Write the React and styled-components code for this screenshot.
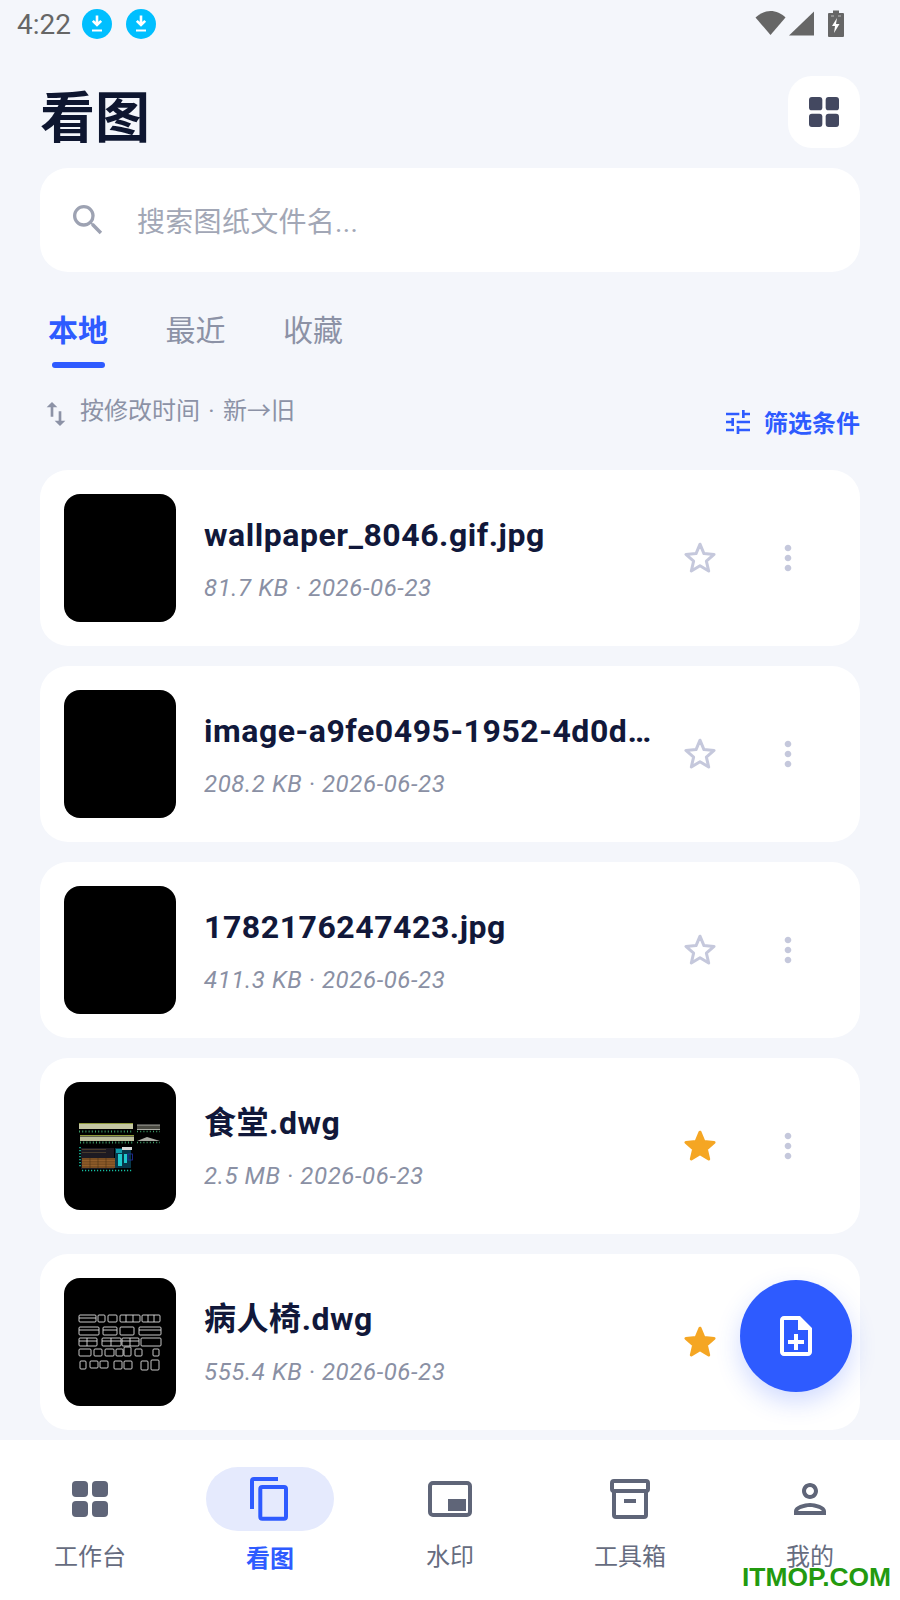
import React from "react";
import styled, { createGlobalStyle } from "styled-components";
import { MdSearch, MdSwapVert, MdTune, MdMoreVert, MdOutlineNoteAdd, MdOutlinePerson } from "react-icons/md";

const Global = createGlobalStyle`
  html, body { margin: 0; padding: 0; background: #f4f6fb; }
  * { box-sizing: border-box; }
  body { font-family: Roboto, "Noto Sans CJK SC", sans-serif; }
`;

const Page = styled.div`
  position: relative;
  width: 900px;
  height: 1600px;
  overflow: hidden;
  background: #f4f6fb;
  display: flex;
  flex-direction: column;
`;

const StatusBar = styled.div`
  height: 50px;
  padding: 0 56px 0 17px;
  display: flex;
  align-items: center;
  color: #666666;
`;
const Time = styled.span`
  font-size: 28px;
  line-height: 50px;
  margin-right: 11px;
  font-weight: 400;
`;
const DownloadBadge = styled.svg`
  width: 30px;
  height: 30px;
  margin: 0 14px 2px 0;
  flex: none;
`;
const StatusRight = styled.div`
  margin-left: auto;
  margin-bottom: 4px;
  display: flex;
  align-items: center;
`;
const StatusSvg = styled.svg`
  display: block;
  margin-left: ${(p) => p.$gap || 0}px;
`;

const Header = styled.div`
  margin-top: 26px;
  padding: 0 40px;
  height: 72px;
  display: flex;
  align-items: center;
  justify-content: space-between;
`;
const Title = styled.h1`
  margin: 0;
  padding-top: 2px;
  font-size: 55px;
  line-height: 72px;
  font-weight: 700;
  color: #0e1630;
  font-family: "Noto Sans CJK SC", sans-serif;
`;
const SquareButton = styled.div`
  width: 72px;
  height: 72px;
  border-radius: 24px;
  background: #fff;
  display: flex;
  align-items: center;
  justify-content: center;
`;

const Search = styled.div`
  margin: 20px 40px 0;
  height: 104px;
  border-radius: 28px;
  background: #fff;
  display: flex;
  align-items: center;
  padding-left: 28px;
  color: #9da2b2;
  svg { flex: none; }
`;
const Placeholder = styled.span`
  margin-left: 29px;
  font-size: 28px;
  letter-spacing: 0.3px;
  color: #a2a7b6;
`;

const Tabs = styled.div`
  margin-top: 33px;
  padding-left: 48px;
  display: flex;
  gap: 57.5px;
`;
const Tab = styled.div`
  display: flex;
  flex-direction: column;
  align-items: center;
  font-size: 30px;
  line-height: 46px;
  width: 60px;
  white-space: nowrap;
  font-family: "Noto Sans CJK SC", sans-serif;
  font-weight: ${(p) => (p.$active ? 700 : 400)};
  color: ${(p) => (p.$active ? "#2e5bff" : "#8c92a6")};
`;
const Underline = styled.span`
  display: block;
  width: 53px;
  height: 6px;
  margin-top: 11px;
  border-radius: 3px;
  background: ${(p) => (p.$active ? "#2e5bff" : "transparent")};
`;

const SortRow = styled.div`
  height: 102px;
  padding: 24px 40px 0 40px;
  display: flex;
  justify-content: space-between;
  align-items: flex-start;
`;
const SortLabel = styled.div`
  display: flex;
  align-items: center;
  font-size: 24px;
  line-height: 32px;
  word-spacing: 2.4px;
  color: #8c92a6;
  svg { margin-top: 6px; margin-right: 8px; }
`;
const FilterLabel = styled.div`
  margin-top: 14px;
  display: flex;
  align-items: center;
  gap: 10px;
  font-size: 24px;
  line-height: 32px;
  font-weight: 700;
  color: #2e5bff;
  font-family: "Noto Sans CJK SC", sans-serif;
`;

const List = styled.div`
  padding: 0 40px;
  display: flex;
  flex-direction: column;
  gap: 20px;
`;
const Card = styled.div`
  height: 176px;
  border-radius: 28px;
  background: #fff;
  display: flex;
  align-items: center;
  padding: 0 52px 0 24px;
`;
const Thumb = styled.div`
  width: 112px;
  height: 128px;
  border-radius: 16px;
  background: #000;
  overflow: hidden;
  flex: none;
  svg { display: block; }
`;
const Info = styled.div`
  flex: 1;
  min-width: 0;
  margin: 0 24px 0 28px;
  padding-top: 3px;
`;
const Name = styled.div`
  margin-top: -3px;
  font-size: 32px;
  line-height: 44px;
  font-weight: 700;
  letter-spacing: 0.55px;
  color: #11183a;
  white-space: nowrap;
  overflow: hidden;
  text-overflow: ellipsis;
`;
const Meta = styled.div`
  margin-top: 15px;
  font-size: 24px;
  line-height: 32px;
  font-style: italic;
  letter-spacing: 0.6px;
  color: #8a90a4;
`;
const StarSlot = styled.div`
  width: 40px;
  height: 40px;
  flex: none;
  color: ${(p) => (p.$on ? "#f5a623" : "#c5c8dc")};
  svg { display: block; }
`;
const MoreSlot = styled.div`
  width: 40px;
  height: 40px;
  margin-left: 48px;
  flex: none;
  color: #c5c8dc;
  svg { display: block; }
`;

const Fab = styled.div`
  position: absolute;
  left: 740px;
  top: 1280px;
  width: 112px;
  height: 112px;
  border-radius: 50%;
  background: #2e5bff;
  color: #fff;
  display: flex;
  align-items: center;
  justify-content: center;
  box-shadow: 0 10px 24px rgba(46, 91, 255, 0.22);
`;

const Nav = styled.nav`
  margin-top: 10px;
  height: 160px;
  background: #fff;
  display: grid;
  grid-template-columns: repeat(5, 180px);
  padding-top: 27px;
`;
const NavItem = styled.div`
  display: flex;
  flex-direction: column;
  align-items: center;
`;
const NavIcon = styled.div`
  width: 128px;
  height: 64px;
  border-radius: 32px;
  display: flex;
  align-items: center;
  justify-content: center;
  color: ${(p) => (p.$active ? "#2e5bff" : "#5f6578")};
  background: ${(p) => (p.$active ? "#e5eafd" : "transparent")};
`;
const NavLabel = styled.span`
  margin-top: ${(p) => (p.$active ? "10px" : "8px")};
  font-size: 24px;
  line-height: 32px;
  font-family: "Noto Sans CJK SC", sans-serif;
  font-weight: ${(p) => (p.$active ? 700 : 400)};
  color: ${(p) => (p.$active ? "#2e5bff" : "#666c80")};
`;

const Watermark = styled.div`
  position: absolute;
  left: 742px;
  top: 1560px;
  font-family: "Liberation Sans", Arial, sans-serif;
  font-weight: 700;
  font-size: 26.4px;
  line-height: 34px;
  color: #239a0f;
  white-space: nowrap;
`;

const Download = () => (
  <DownloadBadge viewBox="0 0 30 30">
    <circle cx="15" cy="15" r="15" fill="#00bfff" />
    <path d="M15 6.5v9M10.8 11.8l4.2 4.2 4.2-4.2" stroke="#fff" strokeWidth="2.6" fill="none" />
    <path d="M10 21.5h10" stroke="#fff" strokeWidth="2" />
  </DownloadBadge>
);

const Wifi = () => (
  <StatusSvg width="31" height="26" viewBox="0 0 31 26">
    <path d="M0.5 7.5C4.5 3.6 10 1 15.5 1s11 2.6 15 6.5L15.5 25z" fill="#666" />
  </StatusSvg>
);
const Signal = () => (
  <StatusSvg $gap={3} width="25" height="26" viewBox="0 0 25 26">
    <path d="M25 1.5V25.5H0z" fill="#666" />
  </StatusSvg>
);
const Battery = () => (
  <StatusSvg $gap={14} width="16" height="27" viewBox="0 0 16 27">
    <path d="M5 0.5h6V3h4a1 1 0 0 1 1 1v22a1 1 0 0 1-1 1H1a1 1 0 0 1-1-1V4a1 1 0 0 1 1-1h4z" fill="#666" />
    <path d="M9 8L4 16h3l-1 7 5.5-9H8z" fill="#fff" />
    <path d="M3 6h3M10 6h3" stroke="#bbb" strokeWidth="1" />
  </StatusSvg>
);

const GridGlyph = ({ size, color, r }) => (
  <svg width={size} height={size} viewBox="0 0 36 36" fill={color}>
    <rect x="0" y="0" width="16" height="16" rx={r} />
    <rect x="20" y="0" width="16" height="16" rx={r} />
    <rect x="0" y="20" width="16" height="16" rx={r} />
    <rect x="20" y="20" width="16" height="16" rx={r} />
  </svg>
);

const CopyIcon = () => (
  <svg width="48" height="48" viewBox="0 0 48 48" fill="none" stroke="currentColor" strokeWidth="4">
    <path d="M6 34V6a2 2 0 0 1 2-2h24" />
    <rect x="14.3" y="12" width="25.7" height="31.7" rx="2" />
  </svg>
);
const PipIcon = () => (
  <svg width="44" height="36" viewBox="0 0 44 36">
    <rect x="2" y="2" width="40" height="32" rx="3" fill="none" stroke="currentColor" strokeWidth="4" />
    <rect x="20" y="18" width="18" height="12" fill="currentColor" />
  </svg>
);
const BoxIcon = () => (
  <svg width="40" height="40" viewBox="0 0 40 40" fill="none" stroke="currentColor" strokeWidth="4">
    <rect x="2" y="2" width="36" height="10" rx="2" />
    <path d="M4 12v24a2 2 0 0 0 2 2h28a2 2 0 0 0 2-2V12" />
    <path d="M14 22h12" />
  </svg>
);

const starPoints = Array.from({ length: 10 }, (_, k) => {
  const rad = k % 2 ? 6.7 : 14.8;
  const a = (Math.PI / 5) * k - Math.PI / 2;
  return `${(20 + rad * Math.cos(a)).toFixed(2)},${(21 + rad * Math.sin(a)).toFixed(2)}`;
}).join(" ");

const StarIcon = ({ filled }) => (
  <svg width="40" height="40" viewBox="0 0 40 40">
    <polygon
      points={starPoints}
      fill={filled ? "currentColor" : "none"}
      stroke="currentColor"
      strokeWidth="3"
      strokeLinejoin="round"
    />
  </svg>
);

const DrawingFood = () => (
  <svg width="112" height="128" viewBox="0 0 112 128">
    <rect x="15" y="42" width="54" height="5" fill="#d9dcb4" opacity="0.9" />
    <path d="M15 41.5h54" stroke="#8f9a3c" strokeWidth="1" />
    <path d="M15 49.5h54" stroke="#3f9f6a" strokeWidth="2" strokeDasharray="1 2.2" />
    <rect x="73" y="43" width="23" height="5" fill="#4a4a42" />
    <path d="M73 43h23M73 47.5h23" stroke="#c8c8c0" strokeWidth="0.8" />
    <path d="M73 49.5h23" stroke="#3f9f6a" strokeWidth="1.6" strokeDasharray="1 2.2" />
    <rect x="16" y="54.5" width="54" height="4.5" fill="#cfd2ae" opacity="0.9" />
    <path d="M16 53.5h54" stroke="#8f9a3c" strokeWidth="1" />
    <path d="M16 60.5h54" stroke="#3f9f6a" strokeWidth="2" strokeDasharray="1 2.2" />
    <path d="M73 59l10-4 13 4z" fill="#a9aaa2" />
    <path d="M73 60.5h23" stroke="#3f9f6a" strokeWidth="1.6" strokeDasharray="1 2.2" />
    <rect x="17" y="66" width="33" height="21" fill="#1c1a22" />
    <path d="M18 67.5h24M18 70.5h24" stroke="#5b4a30" strokeWidth="0.7" />
    <rect x="18" y="76" width="33" height="10" fill="#7a4e22" />
    <path d="M18 78.5h33M18 81h33M18 83.5h33" stroke="#a56c32" strokeWidth="0.6" />
    <path d="M26 76v10M34 76v10M42 76v10" stroke="#4a3216" strokeWidth="0.6" />
    <rect x="51" y="66" width="16" height="20" fill="#07384a" />
    <rect x="52" y="67" width="6" height="4" fill="#0f9aa8" />
    <rect x="58" y="65" width="10" height="3" fill="#d8d8d8" />
    <rect x="54" y="72" width="4" height="12" fill="#1fc9cc" />
    <rect x="60" y="72" width="3" height="9" fill="#1fc9cc" />
    <rect x="64" y="72" width="4.5" height="6" fill="none" stroke="#2530a8" strokeWidth="0.8" />
    <path d="M16 65v21M18 88.5h50" stroke="#14c0a2" strokeWidth="1.6" strokeDasharray="1.2 1.8" />
  </svg>
);

const chairRows = [
  [[15,37,17,7],[34,37,7,7],[44,37,9,7],[56,37,20,7],[78,37,18,7]],
  [[15,49,20,8],[39,49,14,8],[56,49,14,8],[75,49,22,8]],
  [[15,60,18,8],[38,60,19,8],[58,60,17,8],[77,60,20,8]],
  [[15,71,12,7],[30,71,8,7],[41,71,9,7],[52,71,7,7],[60,69,7,9],[71,71,7,7],[89,71,6,7]],
  [[16,83,6,8],[26,83,8,7],[36,83,8,7],[50,83,8,8],[60,83,8,8],[77,83,7,9],[87,82,8,10]],
];
const DrawingChair = () => (
  <svg width="112" height="128" viewBox="0 0 112 128" fill="none" stroke="#dedede" strokeWidth="0.9">
    {chairRows.flat().map(([x, y, w, h], i) => (
      <rect key={i} x={x} y={y} width={w} height={h} rx="1" />
    ))}
    <path d="M15 40h17M15 52h20M39 52h14M75 52h22M15 63h18M38 63h19M58 63h17M23 60v8M47 60v8M66 60v8M62 37v7M69 37v7M84 37v7M90 37v7" />
  </svg>
);

const files = [
  { name: "wallpaper_8046.gif.jpg", meta: "81.7 KB · 2026-06-23" },
  { name: "image-a9fe0495-1952-4d0d-b7c1-90aa.jpg", meta: "208.2 KB · 2026-06-23" },
  { name: "1782176247423.jpg", meta: "411.3 KB · 2026-06-23" },
  { name: "食堂.dwg", meta: "2.5 MB · 2026-06-23", star: true, drawing: <DrawingFood /> },
  { name: "病人椅.dwg", meta: "555.4 KB · 2026-06-23", star: true, drawing: <DrawingChair /> },
];

export default function App() {
  return (
    <Page>
      <Global />
      <StatusBar>
        <Time>4:22</Time>
        <Download />
        <Download />
        <StatusRight>
          <Wifi />
          <Signal />
          <Battery />
        </StatusRight>
      </StatusBar>

      <Header>
        <Title>看图</Title>
        <SquareButton>
          <GridGlyph size={30} color="#434860" r={3.5} />
        </SquareButton>
      </Header>

      <Search>
        <MdSearch size={40} />
        <Placeholder>搜索图纸文件名...</Placeholder>
      </Search>

      <Tabs>
        <Tab $active>本地<Underline $active /></Tab>
        <Tab>最近<Underline /></Tab>
        <Tab>收藏<Underline /></Tab>
      </Tabs>

      <SortRow>
        <SortLabel>
          <MdSwapVert size={32} />
          按修改时间 · 新→旧
        </SortLabel>
        <FilterLabel>
          <MdTune size={32} />
          筛选条件
        </FilterLabel>
      </SortRow>

      <List>
        {files.map((f) => (
          <Card key={f.name}>
            <Thumb>{f.drawing}</Thumb>
            <Info>
              <Name>{f.name}</Name>
              <Meta>{f.meta}</Meta>
            </Info>
            <StarSlot $on={f.star}>
              <StarIcon filled={f.star} />
            </StarSlot>
            <MoreSlot>
              <MdMoreVert size={40} />
            </MoreSlot>
          </Card>
        ))}
      </List>

      <Fab>
        <MdOutlineNoteAdd size={48} />
      </Fab>

      <Nav>
        <NavItem>
          <NavIcon><GridGlyph size={36} color="currentColor" r={4} /></NavIcon>
          <NavLabel>工作台</NavLabel>
        </NavItem>
        <NavItem>
          <NavIcon $active><CopyIcon /></NavIcon>
          <NavLabel $active>看图</NavLabel>
        </NavItem>
        <NavItem>
          <NavIcon><PipIcon /></NavIcon>
          <NavLabel>水印</NavLabel>
        </NavItem>
        <NavItem>
          <NavIcon><BoxIcon /></NavIcon>
          <NavLabel>工具箱</NavLabel>
        </NavItem>
        <NavItem>
          <NavIcon><MdOutlinePerson size={48} /></NavIcon>
          <NavLabel>我的</NavLabel>
        </NavItem>
      </Nav>

      <Watermark>ITMOP.COM</Watermark>
    </Page>
  );
}
